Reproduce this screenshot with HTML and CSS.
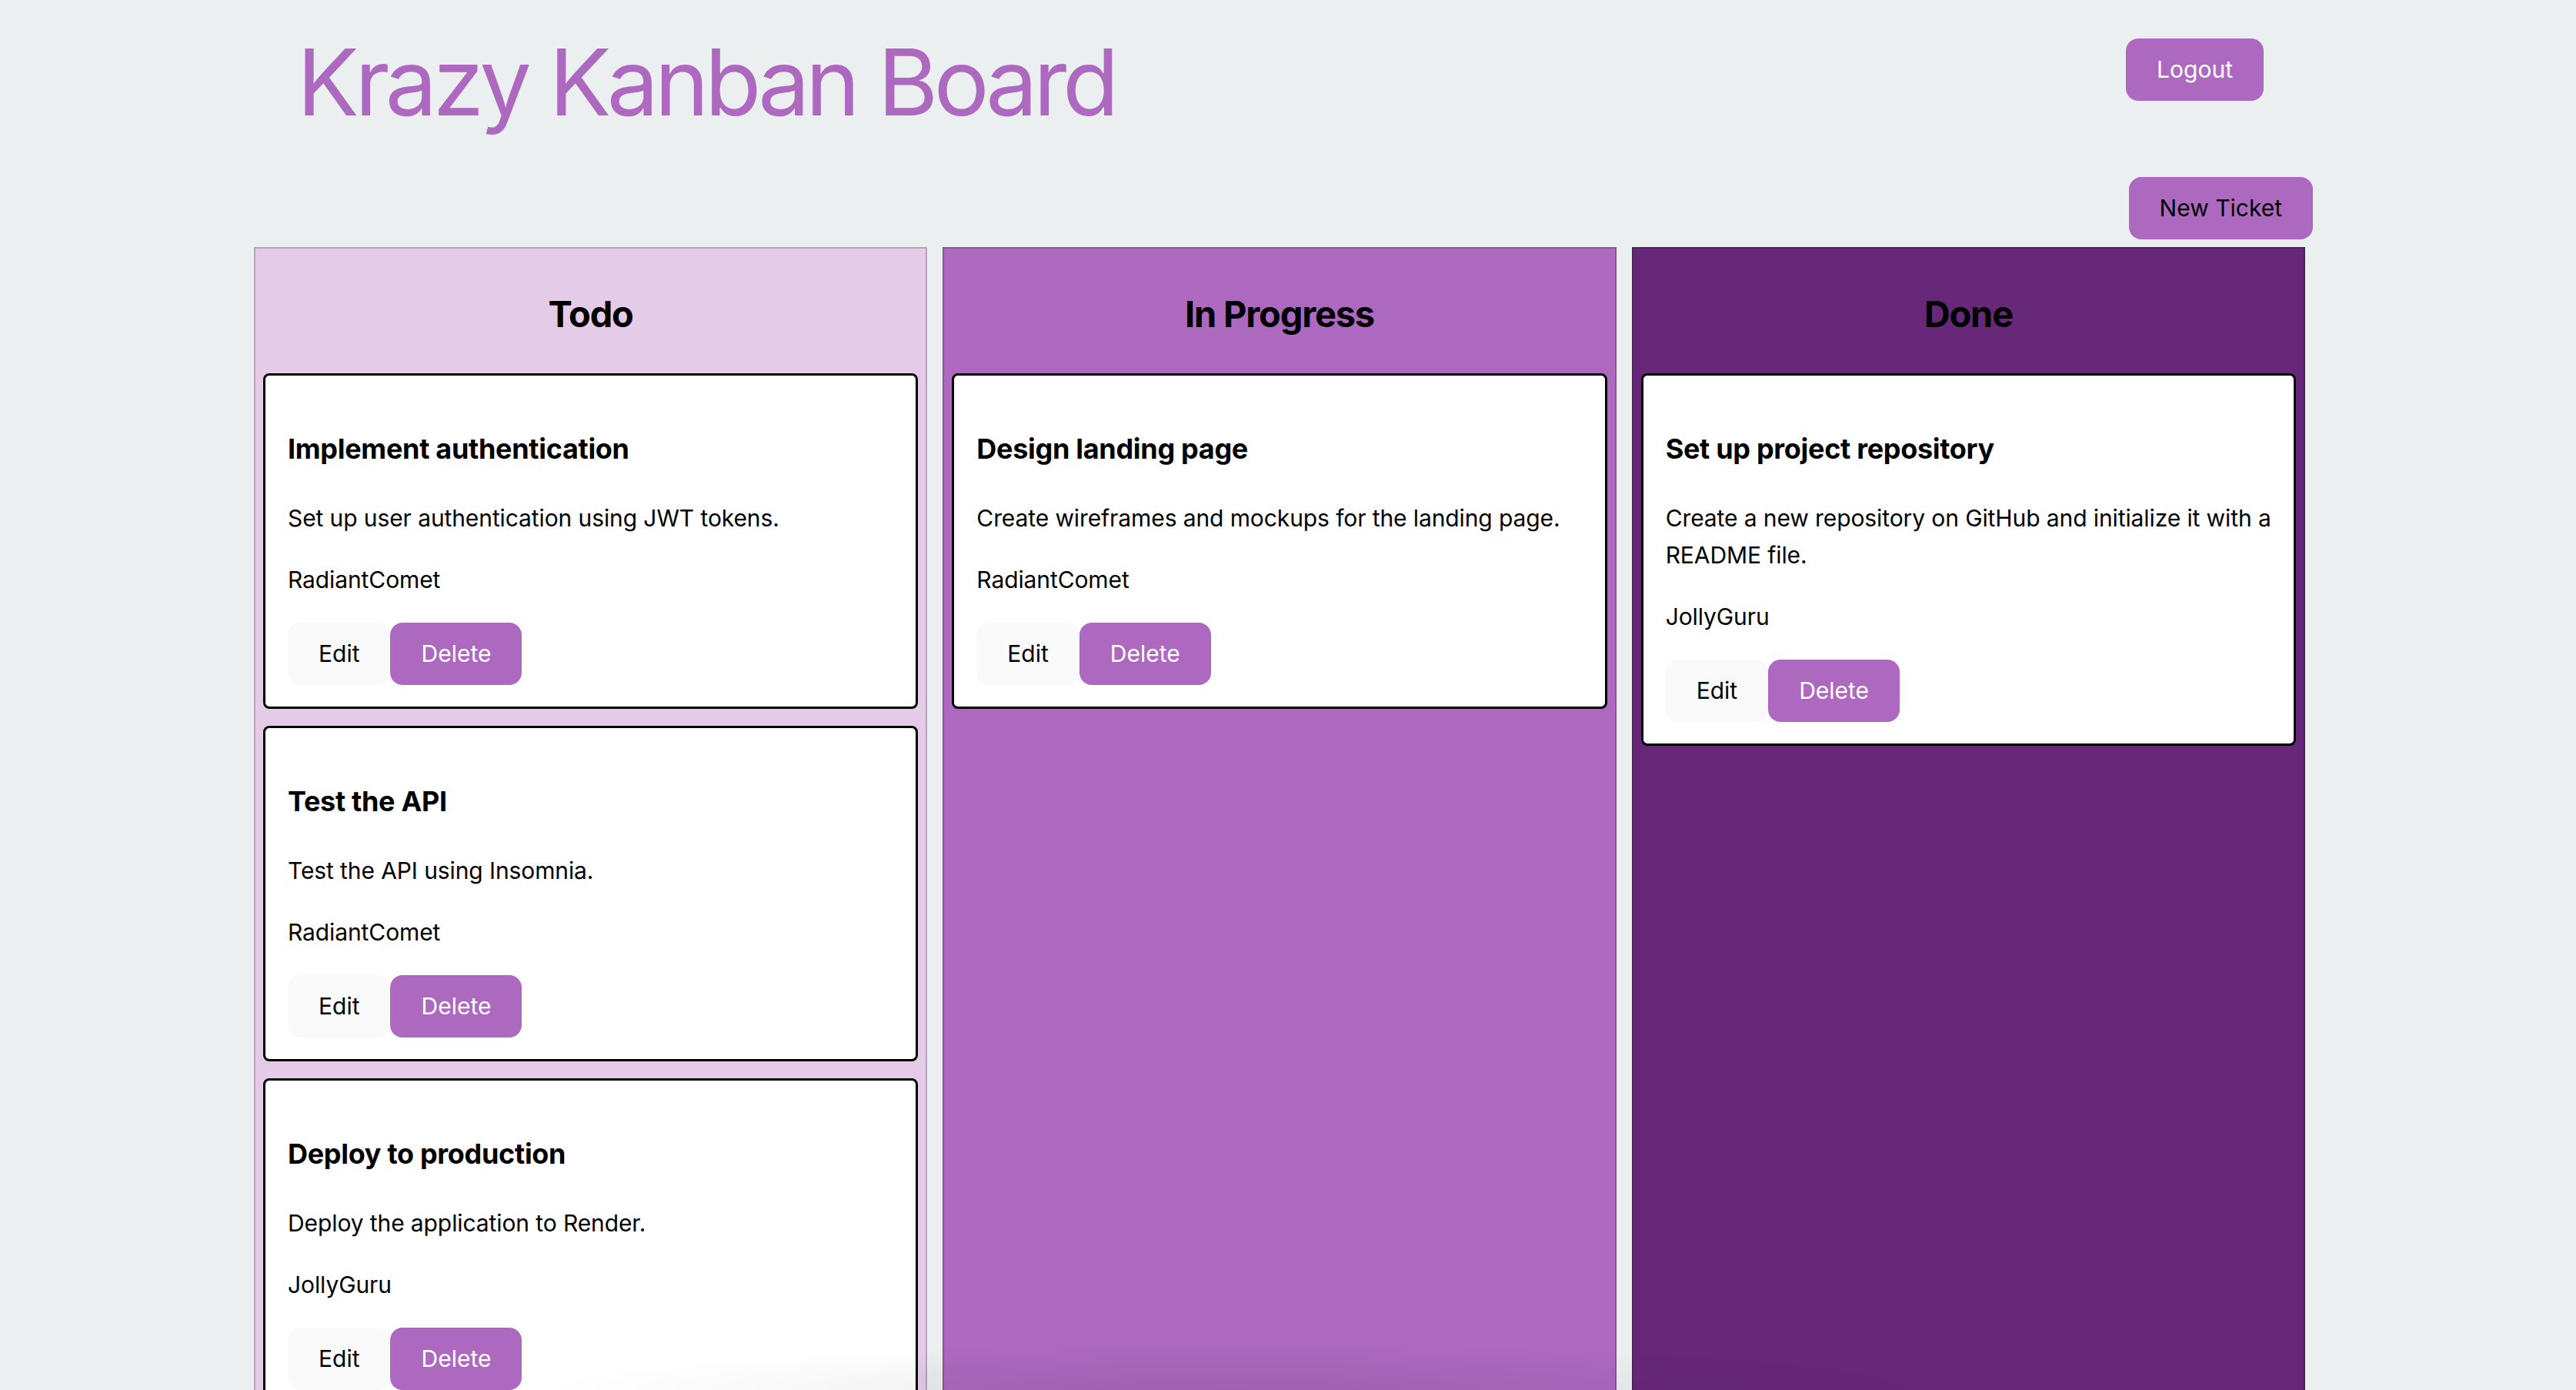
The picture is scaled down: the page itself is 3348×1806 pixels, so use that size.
FILE: index.html
```html
<!DOCTYPE html>
<html lang="en">
<head>
<meta charset="utf-8">
<title>Krazy Kanban Board</title>
<link rel="stylesheet" href="styles.css">
</head>
<body>
<div class="app">
  <header class="nav">
    <h1 class="brand">Krazy Kanban Board</h1>
    <button class="btn btn-primary btn-logout">Logout</button>
  </header>
  <div class="toolbar">
    <button class="btn btn-primary btn-new">New Ticket</button>
  </div>
  <main class="board">
    <section class="swim-lane lane-todo">
      <h2 class="lane-title">Todo</h2>
      <article class="ticket">
        <h3 class="ticket-title">Implement authentication</h3>
        <p class="ticket-text">Set up user authentication using JWT tokens.</p>
        <p class="ticket-text">RadiantComet</p>
        <div class="ticket-actions"><button class="btn btn-edit">Edit</button><button class="btn btn-delete">Delete</button></div>
      </article>
      <article class="ticket">
        <h3 class="ticket-title">Test the API</h3>
        <p class="ticket-text">Test the API using Insomnia.</p>
        <p class="ticket-text">RadiantComet</p>
        <div class="ticket-actions"><button class="btn btn-edit">Edit</button><button class="btn btn-delete">Delete</button></div>
      </article>
      <article class="ticket">
        <h3 class="ticket-title">Deploy to production</h3>
        <p class="ticket-text">Deploy the application to Render.</p>
        <p class="ticket-text">JollyGuru</p>
        <div class="ticket-actions"><button class="btn btn-edit">Edit</button><button class="btn btn-delete">Delete</button></div>
      </article>
    </section>
    <section class="swim-lane lane-progress">
      <h2 class="lane-title">In Progress</h2>
      <article class="ticket">
        <h3 class="ticket-title">Design landing page</h3>
        <p class="ticket-text">Create wireframes and mockups for the landing page.</p>
        <p class="ticket-text">RadiantComet</p>
        <div class="ticket-actions"><button class="btn btn-edit">Edit</button><button class="btn btn-delete">Delete</button></div>
      </article>
    </section>
    <section class="swim-lane lane-done">
      <h2 class="lane-title">Done</h2>
      <article class="ticket">
        <h3 class="ticket-title">Set up project repository</h3>
        <p class="ticket-text">Create a new repository on GitHub and initialize it with a README file.</p>
        <p class="ticket-text">JollyGuru</p>
        <div class="ticket-actions"><button class="btn btn-edit">Edit</button><button class="btn btn-delete">Delete</button></div>
      </article>
    </section>
  </main>
</div>
<div class="bottom-shade"></div>
</body>
</html>
```

FILE: styles.css
```css
html, body {
  margin: 0;
  padding: 0;
}

body {
  background: #ebeff0;
  font-family: Inter, "Noto Sans", "Liberation Sans", sans-serif;
  font-size: 30px;
  line-height: 1.6;
  color: #000;
  height: 1806px;
  overflow: hidden;
}

.app {
  width: 2686px;
  margin-left: 320px;
}

.nav {
  display: flex;
  justify-content: space-between;
  align-items: flex-start;
  padding: 41px 64px 0 66px;
}

.brand {
  margin: 0;
  font-size: 120px;
  line-height: 132px;
  font-weight: 400;
  color: #ad69bf;
  letter-spacing: -5.5px;
}

.btn {
  font-family: inherit;
  font-size: 30px;
  font-weight: 400;
  line-height: 41px;
  padding: 19px 39px;
  border: 1px solid transparent;
  border-radius: 16px;
  cursor: pointer;
}

.btn-primary {
  background: #ad69bf;
}

.btn-logout {
  margin-top: 9px;
  color: #fff;
}

.toolbar {
  display: flex;
  justify-content: flex-end;
  margin-top: 57px;
}

.btn-new {
  color: #000;
}

.board {
  display: flex;
  align-items: stretch;
  margin-top: 10px;
}

.swim-lane {
  flex: 1 1 0;
  margin: 0 10px;
  padding: 8px 10px 0;
  border: 2px solid rgba(0, 0, 0, 0.2);
  min-height: 1600px;
}

.lane-todo { background: #e4cce9; }
.lane-progress { background: #ad69bf; }
.lane-done { background: #68287a; }

.lane-title {
  margin: 42px 0;
  text-align: center;
  font-size: 47px;
  line-height: 70px;
  font-weight: 700;
  letter-spacing: -1.2px;
}

.ticket {
  background: #fff;
  border: 3px solid #000;
  border-radius: 8px;
  padding: 29px 22px 28px 29px;
  margin: 0 0 22px;
}

.ticket-title {
  margin: 36px 0;
  font-size: 36px;
  line-height: 60px;
  font-weight: 700;
  letter-spacing: -0.3px;
}

.ticket-text {
  margin: 32px 0;
  font-size: 30px;
  line-height: 48px;
  letter-spacing: -0.1px;
}

.ticket-actions {
  display: flex;
}

.btn-edit {
  background: #f9f9f9;
  color: #000;
}

.btn-delete {
  background: #ad69bf;
  color: #fff;
}

.bottom-shade {
  position: fixed;
  left: 0;
  right: 0;
  bottom: 0;
  height: 60px;
  pointer-events: none;
  background: radial-gradient(ellipse 900px 60px at 1600px 100%, rgba(0, 0, 0, 0.07), rgba(0, 0, 0, 0) 100%);
}
```
